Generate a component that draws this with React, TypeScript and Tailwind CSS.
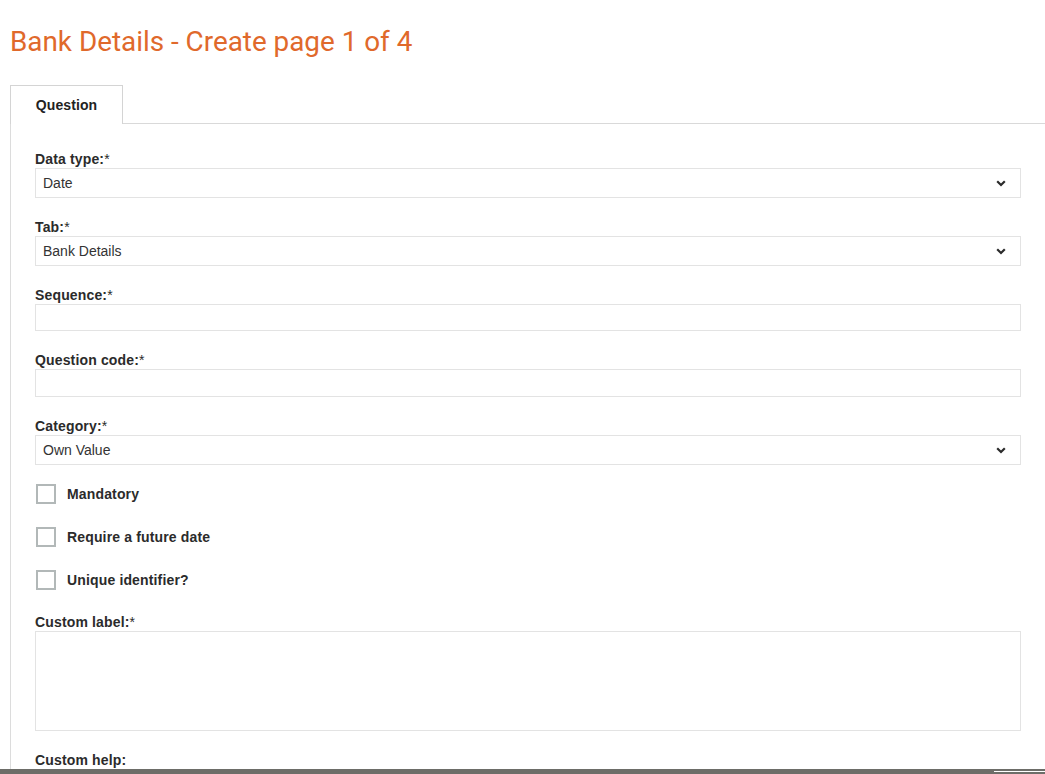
import React from "react";

function Label({ text, required }: { text: string; required?: boolean }) {
  return (
    <div className="h-[19px] pt-px text-[14px] font-bold leading-[19px] tracking-[0.15px] text-[#2b2b2b]">
      {text}
      {required && <span className="font-normal">*</span>}
    </div>
  );
}

function Chevron() {
  return (
    <svg width="10" height="7" viewBox="0 0 10 7" className="text-[#2b2b2b]">
      <path d="M1.2 1.2 L5 5 L8.8 1.2" fill="none" stroke="currentColor" strokeWidth="2.2" />
    </svg>
  );
}

function SelectField({ label, value }: { label: string; value: string }) {
  return (
    <div className="mb-[19px]">
      <Label text={label} required />
      <div className="flex h-[30px] items-center justify-between border border-[#e3e3e3] pl-[7px] pr-[14px] text-[14px] text-[#333]">
        <span>{value}</span>
        <Chevron />
      </div>
    </div>
  );
}

function TextField({ label, height }: { label: string; height: string }) {
  return (
    <div className="mb-[19px]">
      <Label text={label} required />
      <div className={`${height} border border-[#e3e3e3]`} />
    </div>
  );
}

function Check({ label }: { label: string }) {
  return (
    <div className="flex h-[20px] items-center">
      <div className="ml-px h-[20px] w-[20px] border-2 border-[#b2b8b8] bg-white" />
      <span className="ml-[11px] text-[14px] font-bold tracking-[0.15px] text-[#2b2b2b]">{label}</span>
    </div>
  );
}

export default function App() {
  return (
    <div
      className="relative h-[774px] overflow-hidden bg-white pl-[10px]"
      style={{ fontFamily: '"Liberation Sans", Arial, sans-serif' }}
    >
      <h1
        className="pt-[25px] text-[27.85px] font-normal leading-[34px] text-[#e0692b]"
        style={{ fontFamily: "Roboto, sans-serif" }}
      >
        Bank Details - Create page 1 of 4
      </h1>

      <div className="mt-[26px] flex">
        <div className="flex h-[39px] w-[113px] items-center justify-center border border-b-0 border-[#d4d4d4] text-[14px] font-bold tracking-[0.1px] text-[#222]">
          Question
        </div>
        <div className="flex-1 border-b border-[#d9d9d9]" />
      </div>

      <div className="border-l border-[#dcdcdc] px-[24px] pt-[25px] pb-10">
        <SelectField label="Data type:" value="Date" />
        <SelectField label="Tab:" value="Bank Details" />
        <TextField label="Sequence:" height="h-[27px]" />
        <TextField label="Question code:" height="h-[28px]" />
        <SelectField label="Category:" value="Own Value" />

        <div className="mt-[2px] mb-[22px] flex flex-col gap-[23px]">
          <Check label="Mandatory" />
          <Check label="Require a future date" />
          <Check label="Unique identifier?" />
        </div>

        <div className="mb-[19px]">
          <Label text="Custom label:" required />
          <div className="h-[100px] border border-[#e3e3e3]" />
        </div>

        <div className="mb-[19px]">
          <Label text="Custom help:" />
          <div className="h-[100px] border border-[#e3e3e3]" />
        </div>
      </div>

      <div className="absolute bottom-0 left-0 right-0 h-[5px] bg-[#6d6d68]">
        <div className="absolute right-0 top-[2px] h-px w-[51px] bg-white" />
      </div>
    </div>
  );
}
